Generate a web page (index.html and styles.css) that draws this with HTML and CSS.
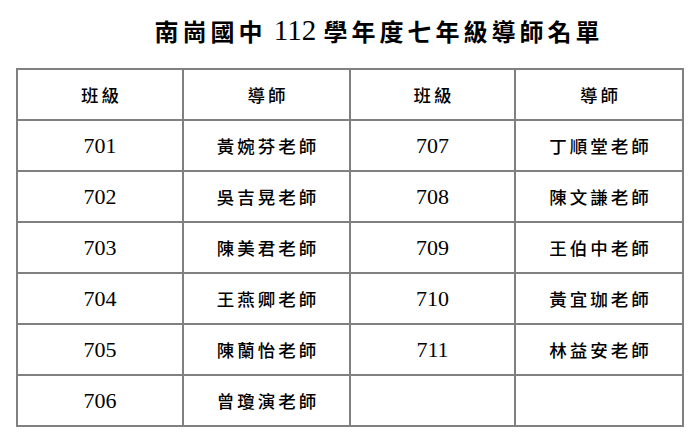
FILE: index.html
```html
<!DOCTYPE html>
<html lang="zh-Hant">
<head>
<meta charset="utf-8">
<title>南崗國中 112 學年度七年級導師名單</title>
<link rel="stylesheet" href="styles.css">
</head>
<body>
<div class="page">
  <h1 class="title"><span class="cjk">南崗國中</span> 112 <span class="cjk">學年度七年級導師名單</span></h1>
  <table class="roster">
    <colgroup>
      <col class="c1"><col class="c2"><col class="c3"><col class="c4">
    </colgroup>
    <thead>
      <tr>
        <th><span class="hd">班級</span></th>
        <th><span class="hd">導師</span></th>
        <th><span class="hd">班級</span></th>
        <th><span class="hd">導師</span></th>
      </tr>
    </thead>
    <tbody>
      <tr><td class="num">701</td><td><span class="name">黃婉芬老師</span></td><td class="num">707</td><td><span class="name">丁順堂老師</span></td></tr>
      <tr><td class="num">702</td><td><span class="name">吳吉晃老師</span></td><td class="num">708</td><td><span class="name">陳文謙老師</span></td></tr>
      <tr><td class="num">703</td><td><span class="name">陳美君老師</span></td><td class="num">709</td><td><span class="name">王伯中老師</span></td></tr>
      <tr><td class="num">704</td><td><span class="name">王燕卿老師</span></td><td class="num">710</td><td><span class="name">黃宜珈老師</span></td></tr>
      <tr><td class="num">705</td><td><span class="name">陳蘭怡老師</span></td><td class="num">711</td><td><span class="name">林益安老師</span></td></tr>
      <tr><td class="num">706</td><td><span class="name">曾瓊演老師</span></td><td></td><td></td></tr>
    </tbody>
  </table>
</div>
</body>
</html>
```

FILE: styles.css
```css
html, body {
  margin: 0;
  padding: 0;
  background: #ffffff;
}

body {
  font-family: "Liberation Serif", "Noto Sans CJK TC", serif;
  color: #000000;
}

.page {
  width: 700px;
  height: 439px;
}

.title {
  margin: 0;
  height: 68px;
  box-sizing: border-box;
  padding: 0 0 8px 58px;
  display: flex;
  align-items: center;
  justify-content: center;
  font-size: 29px;
  font-weight: normal;
  white-space: pre;
}

.title .cjk {
  font-family: "Noto Sans CJK TC", sans-serif;
  font-size: 24px;
  font-weight: 700;
  letter-spacing: 4px;
}

.roster {
  margin-left: 16px;
  width: 666px;
  table-layout: fixed;
  border-collapse: collapse;
}

.roster .c1 { width: 166px; }
.roster .c2 { width: 167px; }
.roster .c3 { width: 165px; }
.roster .c4 { width: 168px; }

.roster th,
.roster td {
  height: 51px;
  padding: 0;
  border: 2px solid #808080;
  text-align: center;
  vertical-align: middle;
  box-sizing: border-box;
}

.roster tbody tr {
  height: 51px;
}

.hd,
.name {
  font-family: "Noto Sans CJK TC", sans-serif;
  font-size: 17.5px;
  font-weight: 500;
  letter-spacing: 3px;
  margin-right: -3px;
}

.roster th {
  font-weight: normal;
}

.num {
  font-size: 22px;
}
```
